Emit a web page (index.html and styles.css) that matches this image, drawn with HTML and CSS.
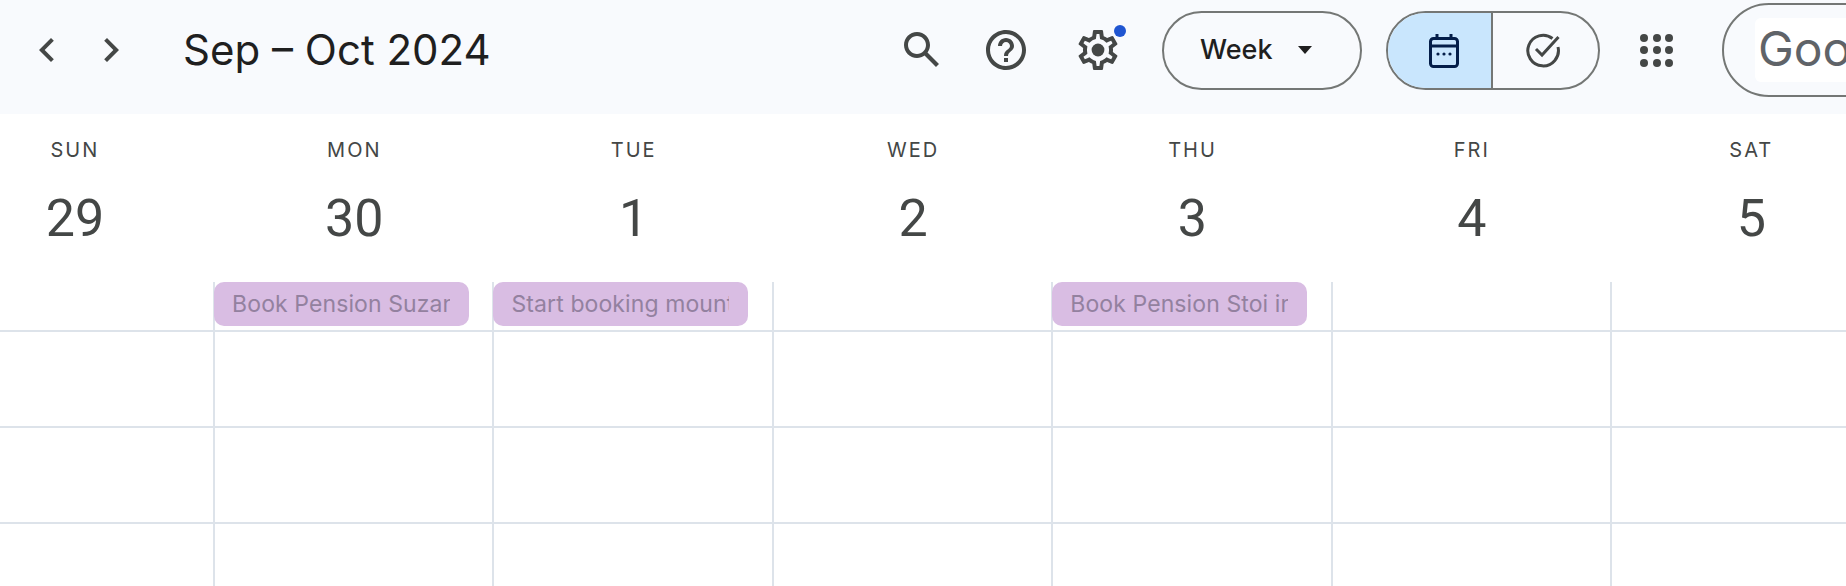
FILE: index.html
```html
<!DOCTYPE html>
<html lang="en">
<head>
    <meta charset="UTF-8">
    <title>Google Calendar - Week of September 29, 2024</title>
    <link rel="stylesheet" href="styles.css">
</head>
<body>

    <!-- Top bar -->
    <header class="topbar">
        <button class="icon-btn nav-btn" aria-label="Previous week">
            <svg viewBox="0 0 24 24"><path d="M15.41 7.41L14 6l-6 6 6 6 1.41-1.41L10.83 12z"/></svg>
        </button>
        <button class="icon-btn nav-btn" aria-label="Next week">
            <svg viewBox="0 0 24 24"><path d="M8.59 16.59L10 18l6-6-6-6-1.41 1.41L13.17 12z"/></svg>
        </button>
        <h1 class="title">Sep – Oct 2024</h1>

        <button class="icon-btn search-btn" aria-label="Search">
            <svg viewBox="0 0 24 24"><path d="M20.49 19l-5.73-5.73C15.53 12.2 16 10.91 16 9.5 16 5.91 13.09 3 9.5 3S3 5.91 3 9.5 5.91 16 9.5 16c1.41 0 2.7-.47 3.77-1.24L19 20.49 20.49 19zM5 9.5C5 7.01 7.01 5 9.5 5S14 7.01 14 9.5 11.99 14 9.5 14 5 11.99 5 9.5z"/></svg>
        </button>
        <button class="icon-btn help-btn" aria-label="Support">
            <svg viewBox="0 0 24 24"><path d="M11 18h2v-2h-2v2zm1-16C6.48 2 2 6.48 2 12s4.48 10 10 10 10-4.48 10-10S17.52 2 12 2zm0 18c-4.41 0-8-3.59-8-8s3.59-8 8-8 8 3.59 8 8-3.59 8-8 8zm0-14c-2.21 0-4 1.79-4 4h2c0-1.1.9-2 2-2s2 .9 2 2c0 2-3 1.75-3 5h2c0-2.25 3-2.5 3-5 0-2.21-1.79-4-4-4z"/></svg>
        </button>
        <button class="icon-btn gear-btn" aria-label="Settings">
            <svg viewBox="0 0 24 24"><path d="M19.43 12.98c.04-.32.07-.64.07-.98 0-.34-.03-.66-.07-.98l2.11-1.65c.19-.15.24-.42.12-.64l-2-3.46c-.09-.16-.26-.25-.44-.25-.06 0-.12.01-.17.03l-2.49 1c-.52-.4-1.08-.73-1.69-.98l-.38-2.65C14.46 2.18 14.25 2 14 2h-4c-.25 0-.46.18-.49.42l-.38 2.65c-.61.25-1.17.59-1.69.98l-2.49-1c-.06-.02-.12-.03-.18-.03-.17 0-.34.09-.43.25l-2 3.46c-.13.22-.07.49.12.64l2.11 1.65c-.04.32-.07.65-.07.98 0 .33.03.66.07.98l-2.11 1.65c-.19.15-.24.42-.12.64l2 3.46c.09.16.26.25.44.25.06 0 .12-.01.17-.03l2.49-1c.52.4 1.08.73 1.69.98l.38 2.65c.03.24.24.42.49.42h4c.25 0 .46-.18.49-.42l.38-2.65c.61-.25 1.17-.59 1.69-.98l2.49 1c.06.02.12.03.18.03.17 0 .34-.09.43-.25l2-3.46c.12-.22.07-.49-.12-.64l-2.11-1.65zm-1.98-1.71c.04.31.05.52.05.73 0 .21-.02.43-.05.73l-.14 1.13.89.7 1.08.84-.7 1.21-1.27-.51-1.04-.42-.9.68c-.43.32-.84.56-1.25.73l-1.06.43-.16 1.13-.2 1.35h-1.4l-.19-1.35-.16-1.13-1.06-.43c-.43-.18-.83-.41-1.23-.71l-.91-.7-1.06.43-1.27.51-.7-1.21 1.08-.84.89-.7-.14-1.13c-.03-.31-.05-.54-.05-.74s.02-.43.05-.73l.14-1.13-.89-.7-1.08-.84.7-1.21 1.27.51 1.04.42.9-.68c.43-.32.84-.56 1.25-.73l1.06-.43.16-1.13.2-1.35h1.39l.19 1.35.16 1.13 1.06.43c.43.18.83.41 1.23.71l.91.7 1.06-.43 1.27-.51.7 1.21-1.07.85-.89.7.14 1.13z"/><circle cx="12" cy="12" r="3.2"/></svg>
            <span class="gear-dot"></span>
        </button>

        <button class="pill week-pill">
            <span>Week</span>
            <span class="caret"></span>
        </button>

        <div class="pill view-pill">
            <button class="view-opt view-active" aria-label="Calendar">
                <svg class="cal-icon" viewBox="0 0 30 35">
                    <path d="M8 1v5M22 1v5" fill="none" stroke-width="3"/>
                    <rect x="1.5" y="5.5" width="27" height="28" rx="3" fill="none" stroke-width="3"/>
                    <path d="M2 13h26" fill="none" stroke-width="3"/>
                    <circle class="cal-dot" cx="9" cy="21" r="1.6"/>
                    <circle class="cal-dot" cx="15" cy="21" r="1.6"/>
                    <circle class="cal-dot" cx="21" cy="21" r="1.6"/>
                </svg>
            </button>
            <button class="view-opt" aria-label="Tasks">
                <svg class="task-icon" viewBox="0 0 36 36">
                    <path d="M27.5 6.5A15.3 15.3 0 1 0 33 15" fill="none" stroke-width="3"/>
                    <path d="M11 17l6 6L33.500 5" fill="none" stroke-width="3"/>
                </svg>
            </button>
        </div>

        <button class="apps-btn" aria-label="Google apps">
            <span></span><span></span><span></span>
            <span></span><span></span><span></span>
            <span></span><span></span><span></span>
        </button>

        <div class="pill account-pill">
            <span class="logo-box">Google</span>
        </div>
    </header>

    <!-- Week grid, first column runs off the left edge -->
    <main class="week">
        <div class="day"><span class="dow">SUN</span><span class="num">29</span></div>
        <div class="day"><span class="dow">MON</span><span class="num">30</span></div>
        <div class="day"><span class="dow">TUE</span><span class="num">1</span></div>
        <div class="day"><span class="dow">WED</span><span class="num">2</span></div>
        <div class="day"><span class="dow">THU</span><span class="num">3</span></div>
        <div class="day"><span class="dow">FRI</span><span class="num">4</span></div>
        <div class="day"><span class="dow">SAT</span><span class="num">5</span></div>

        <div class="cell"></div>
        <div class="cell"><div class="chip"><span>Book Pension Suzanne</span></div></div>
        <div class="cell"><div class="chip"><span>Start booking mountain huts</span></div></div>
        <div class="cell"></div>
        <div class="cell"><div class="chip"><span>Book Pension Stoi in Vent</span></div></div>
        <div class="cell"></div>
        <div class="cell"></div>

        <div class="cell"></div><div class="cell"></div><div class="cell"></div><div class="cell"></div><div class="cell"></div><div class="cell"></div><div class="cell"></div>
        <div class="cell"></div><div class="cell"></div><div class="cell"></div><div class="cell"></div><div class="cell"></div><div class="cell"></div><div class="cell"></div>
        <div class="cell"></div><div class="cell"></div><div class="cell"></div><div class="cell"></div><div class="cell"></div><div class="cell"></div><div class="cell"></div>
    </main>

</body>
</html>
```

FILE: styles.css
```css
/* General styles */
html, body {
    margin: 0;
    height: 586px;
    overflow: hidden;
}
body {
    font-family: Inter, Roboto, sans-serif;
    background-color: #fff;
    color: #1f1f1f;
}
button {
    font: inherit;
    color: inherit;
    background: none;
    border: none;
    padding: 0;
}
svg {
    display: block;
}

/* Top bar */
.topbar {
    display: flex;
    align-items: center;
    box-sizing: border-box;
    width: 1846px;
    height: 114px;
    padding: 0 0 14px 15px;
    background-color: #f8fafd;
    overflow: hidden;
}
.icon-btn {
    position: relative;
    flex: none;
    width: 48px;
    height: 48px;
    fill: #444746;
}
.nav-btn {
    width: 64px;
    display: flex;
    justify-content: center;
}
.nav-btn svg, .search-btn svg, .help-btn svg, .gear-btn svg {
    width: 48px;
    height: 48px;
}
.title {
    flex: none;
    width: 715px;
    margin: 0 0 0 40px;
    padding-bottom: 2px;
    font-size: 42px;
    font-weight: 400;
}
.help-btn {
    margin-left: 36px;
}
.gear-btn {
    margin-left: 44px;
}
.gear-dot {
    position: absolute;
    top: -1px;
    right: -4px;
    width: 12px;
    height: 12px;
    border-radius: 50%;
    background-color: #1f55d1;
}

/* Pills */
.pill {
    flex: none;
    box-sizing: border-box;
    border: 2px solid #747775;
    border-radius: 40px;
}
.week-pill {
    display: flex;
    align-items: center;
    width: 200px;
    height: 79px;
    margin-left: 40px;
    padding: 0 0 1px 36px;
    font-size: 27px;
    font-weight: 500;
}
.caret {
    margin-left: 25px;
    border-left: 7px solid transparent;
    border-right: 7px solid transparent;
    border-top: 8px solid #1f1f1f;
}
.view-pill {
    display: flex;
    width: 214px;
    height: 79px;
    margin-left: 24px;
    overflow: hidden;
}
.view-opt {
    display: flex;
    align-items: center;
    justify-content: center;
    width: 106px;
}
.view-active {
    background-color: #c9e6fd;
    border-right: 2px solid #747775;
}
.cal-icon {
    width: 30px;
    height: 35px;
    stroke: #041e49;
    margin-left: 8px;
}
.cal-dot {
    fill: #041e49;
    stroke: none;
}
.task-icon {
    width: 36px;
    height: 36px;
    margin-right: 6px;
    stroke: #444746;
}

.apps-btn {
    flex: none;
    display: grid;
    grid-template-columns: repeat(3, 8px);
    grid-auto-rows: 8px;
    gap: 4.500px;
    margin-left: 40px;
}
.apps-btn span {
    border-radius: 50%;
    background-color: #444746;
}

.account-pill {
    display: flex;
    align-items: center;
    width: 300px;
    height: 94px;
    margin-left: 49px;
    padding-left: 31px;
    border-radius: 47px;
}
.logo-box {
    width: 240px;
    height: 64px;
    padding-left: 3px;
    border-radius: 6px;
    background-color: #fff;
    color: #5f6368;
    font-size: 48px;
    line-height: 62px;
}

/* Week grid */
.week {
    display: grid;
    grid-template-columns: repeat(7, 279.4px);
    grid-template-rows: 168px 50px 96px 96px 62px;
    margin-left: -66.3px;
}
.day {
    display: flex;
    flex-direction: column;
    align-items: center;
    padding-left: 3px;
    color: #444746;
}
.dow {
    margin-top: 24px;
    font-size: 20px;
    line-height: 24px;
    letter-spacing: 2px;
}
.num {
    margin-top: 25px;
    font-family: Roboto, sans-serif;
    font-size: 52px;
    line-height: 64px;
}
.cell {
    box-sizing: border-box;
    border-left: 2px solid #dde3ea;
    border-bottom: 2px solid #dde3ea;
}
.cell:nth-last-child(-n+7) {
    border-bottom: none;
}
.chip {
    box-sizing: border-box;
    width: 255px;
    height: 44px;
    margin-left: -1px;
    padding: 0 19px 0 18px;
    border-radius: 10px;
    background-color: #d9bde3;
    color: #93819f;
    font-size: 23px;
    letter-spacing: 0.1px;
    line-height: 44px;
}
.chip span {
    display: block;
    overflow: hidden;
    white-space: nowrap;
}
```
